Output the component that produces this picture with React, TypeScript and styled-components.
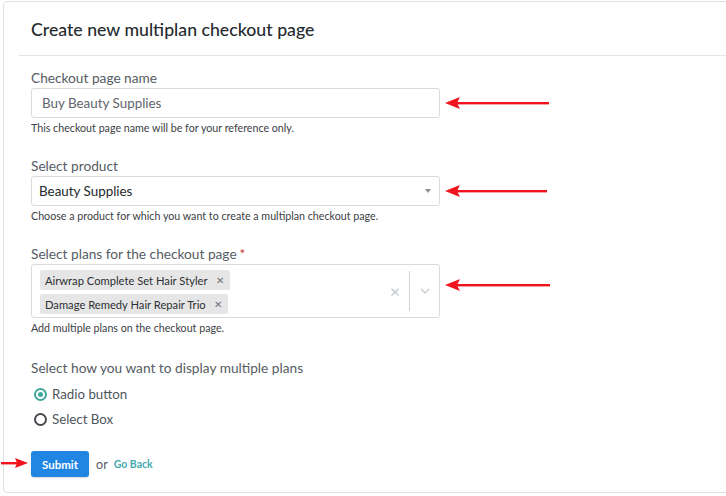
import styled, { createGlobalStyle } from "styled-components";

const GlobalStyle = createGlobalStyle`
  html, body {
    margin: 0;
    padding: 0;
    background: #ffffff;
    overflow: hidden;
  }
  body {
    font-family: Lato, "Noto Sans", "Liberation Sans", sans-serif;
    -webkit-font-smoothing: antialiased;
  }
`;

const Card = styled.div`
  margin: 1px 0 0 3px;
  width: 760px;
  border: 1px solid #dcdfe3;
  border-radius: 4px;
  background: #fff;
`;

const Header = styled.div`
  margin-left: 15px;
  padding: 17px 0 14px 12px;
  border-bottom: 1px solid #e3e5e8;
`;

const Title = styled.h1`
  margin: 0;
  font-size: 17.7px;
  line-height: 22px;
  font-weight: 500;
  color: #262b30;
`;

const Body = styled.div`
  padding: 14px 0 15px 27px;
`;

const Field = styled.div<{ $last?: boolean }>`
  margin-bottom: ${({ $last }) => ($last ? 25 : 23)}px;
`;

const Label = styled.div`
  font-size: 13.7px;
  line-height: 16px;
  color: #555c63;
  margin-bottom: 2px;
`;

const Required = styled.span`
  color: #d0322d;
  margin-left: 3px;
`;

const Row = styled.div`
  display: flex;
  align-items: center;
`;

const TextInput = styled.div`
  box-sizing: border-box;
  width: 409px;
  height: 30px;
  border: 1px solid #d8dbdf;
  border-radius: 3px;
  padding: 0 10px;
  display: flex;
  align-items: center;
  font-size: 13.4px;
  color: #5f656b;
`;

const SelectBox = styled(TextInput)`
  padding: 0 8px 0 7px;
  color: #24282c;
  justify-content: space-between;
`;

const Caret = styled.span`
  width: 0;
  height: 0;
  border-left: 3.5px solid transparent;
  border-right: 3.5px solid transparent;
  border-top: 4px solid #8a8f94;
`;

const MultiBox = styled.div`
  box-sizing: border-box;
  width: 409px;
  height: 54px;
  border: 1px solid #d8dbdf;
  border-radius: 3px;
  display: flex;
  align-items: center;
`;

const TagList = styled.div`
  flex: 1;
  display: flex;
  flex-direction: column;
  align-items: flex-start;
  gap: 4px;
  padding: 2px 0 0 8px;
`;

const Tag = styled.span`
  display: inline-flex;
  align-items: center;
  height: 20px;
  padding: 0 6px 0 5px;
  background: #e6e6e6;
  border-radius: 2px;
  font-size: 11.2px;
  color: #2c3034;
`;

const TagX = styled.span`
  margin-left: 8px;
  font-size: 10px;
  color: #6e7378;
`;

const Indicators = styled.div`
  display: flex;
  align-items: center;
  height: 40px;
`;

const ClearX = styled.span`
  width: 28px;
  text-align: center;
  font-size: 18px;
  color: #c4c7ca;
`;

const Divider = styled.span`
  width: 1px;
  align-self: stretch;
  background: #d0d3d6;
`;

const Chevron = styled.span`
  width: 29px;
  display: flex;
  justify-content: center;
  color: #c4c7ca;
`;

const Help = styled.div`
  margin-top: 3px;
  font-size: 10.7px;
  line-height: 14px;
  color: #3c4146;
`;

const RadioGroup = styled.div`
  margin-top: 8px;
  display: flex;
  flex-direction: column;
  gap: 5px;
`;

const RadioRow = styled.label`
  display: flex;
  align-items: center;
  height: 20px;
  font-size: 13.3px;
  color: #4f565c;
  padding-left: 3px;
`;

const RadioCircle = styled.span<{ $checked?: boolean }>`
  box-sizing: border-box;
  width: 13px;
  height: 13px;
  border-radius: 50%;
  margin-right: 5px;
  border: 2px solid ${({ $checked }) => ($checked ? "#3ea99c" : "#45494d")};
  display: flex;
  align-items: center;
  justify-content: center;
  &::after {
    content: "";
    width: 5px;
    height: 5px;
    border-radius: 50%;
    background: ${({ $checked }) => ($checked ? "#3ea99c" : "transparent")};
  }
`;

const Actions = styled.div`
  position: relative;
  margin-top: 22px;
  display: flex;
  align-items: center;
`;

const SubmitButton = styled.button`
  height: 26px;
  padding: 0 11px;
  border: none;
  border-radius: 3px;
  background: #2185e4;
  color: #fff;
  font-family: inherit;
  font-size: 11.5px;
  font-weight: 700;
  box-shadow: 0 1px 2px rgba(0, 0, 0, 0.15);
`;

const Or = styled.span`
  margin: 0 6px 0 7px;
  font-size: 12.5px;
  color: #555a60;
`;

const GoBack = styled.a`
  font-size: 10.5px;
  font-weight: 700;
  color: #45aab0;
  text-decoration: none;
`;

const SideArrow = styled.svg<{ $top?: boolean }>`
  margin-left: 5px;
  flex-shrink: 0;
  align-self: ${({ $top }) => ($top ? "flex-start" : "center")};
  margin-top: ${({ $top }) => ($top ? 14 : 0)}px;
`;

const SubmitArrow = styled.svg`
  position: absolute;
  left: -30px;
  top: 6px;
`;

const RedArrow = ({ width, top }: { width: number; top?: boolean }) => (
  <SideArrow $top={top} width={width} height={14} viewBox={`0 0 ${width} 14`}>
    <polygon points="0,7 15,1 12,7 15,13" fill="#f2141c" />
    <rect x={12} y={6} width={width - 12} height={2.4} fill="#f2141c" />
  </SideArrow>
);

const ChevronDown = () => (
  <svg width="10" height="6" viewBox="0 0 10 6">
    <path d="M1 1l4 4 4-4" fill="none" stroke="#c4c7ca" strokeWidth="1.2" />
  </svg>
);

export default function App() {
  return (
    <>
      <GlobalStyle />
      <Card>
        <Header>
          <Title>Create new multiplan checkout page</Title>
        </Header>
        <Body>
          <Field>
            <Label>Checkout page name</Label>
            <Row>
              <TextInput>Buy Beauty Supplies</TextInput>
              <RedArrow width={104} />
            </Row>
            <Help>This checkout page name will be for your reference only.</Help>
          </Field>

          <Field>
            <Label>Select product</Label>
            <Row>
              <SelectBox>
                Beauty Supplies
                <Caret />
              </SelectBox>
              <RedArrow width={102} />
            </Row>
            <Help>Choose a product for which you want to create a multiplan checkout page.</Help>
          </Field>

          <Field $last>
            <Label>
              Select plans for the checkout page<Required>*</Required>
            </Label>
            <Row>
              <MultiBox>
                <TagList>
                  <Tag>
                    Airwrap Complete Set Hair Styler<TagX>✕</TagX>
                  </Tag>
                  <Tag>
                    Damage Remedy Hair Repair Trio<TagX>✕</TagX>
                  </Tag>
                </TagList>
                <Indicators>
                  <ClearX>×</ClearX>
                  <Divider />
                  <Chevron>
                    <ChevronDown />
                  </Chevron>
                </Indicators>
              </MultiBox>
              <RedArrow width={105} top />
            </Row>
            <Help>Add multiple plans on the checkout page.</Help>
          </Field>

          <Label>Select how you want to display multiple plans</Label>
          <RadioGroup>
            <RadioRow>
              <RadioCircle $checked />
              Radio button
            </RadioRow>
            <RadioRow>
              <RadioCircle />
              Select Box
            </RadioRow>
          </RadioGroup>

          <Actions>
            <SubmitArrow width={27} height={12} viewBox="0 0 27 12">
              <rect x={0} y={5} width={16} height={2.4} fill="#f2141c" />
              <polygon points="27,6 14,1 16,6 14,11" fill="#f2141c" />
            </SubmitArrow>
            <SubmitButton>Submit</SubmitButton>
            <Or>or</Or>
            <GoBack href="#">Go Back</GoBack>
          </Actions>
        </Body>
      </Card>
    </>
  );
}
